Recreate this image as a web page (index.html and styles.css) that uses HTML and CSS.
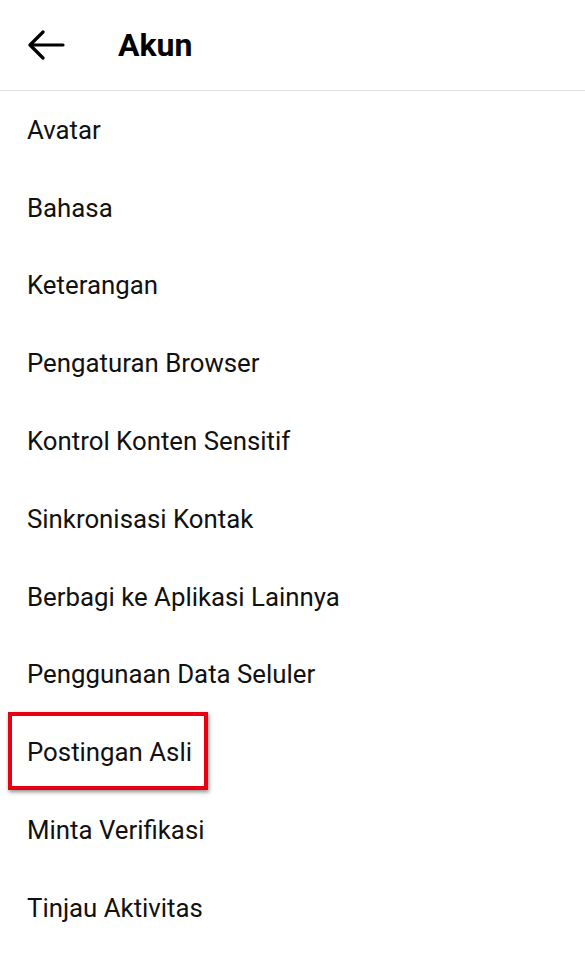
FILE: index.html
```html
<!DOCTYPE html>
<html lang="id">
<head>
    <meta charset="UTF-8">
    <meta name="viewport" content="width=device-width, initial-scale=1.0">
    <title>Akun</title>
    <link rel="stylesheet" href="styles.css">
</head>
<body>
    <div class="header">
        <svg class="back" width="38" height="30" viewBox="0 0 38 30">
            <path d="M36 15H3M16 2L3 15l13 13" fill="none" stroke="#000" stroke-width="3.2" stroke-linecap="round" stroke-linejoin="round"/>
        </svg>
        <h1>Akun</h1>
    </div>
    <ul class="menu">
        <li>Avatar</li>
        <li>Bahasa</li>
        <li>Keterangan</li>
        <li>Pengaturan Browser</li>
        <li>Kontrol Konten Sensitif</li>
        <li>Sinkronisasi Kontak</li>
        <li>Berbagi ke Aplikasi Lainnya</li>
        <li>Penggunaan Data Seluler</li>
        <li class="marked"><span class="mark"></span>Postingan Asli</li>
        <li>Minta Verifikasi</li>
        <li>Tinjau Aktivitas</li>
    </ul>
</body>
</html>
```

FILE: styles.css
```css
body {
    margin: 0;
    font-family: Roboto, "Noto Sans", sans-serif;
    background: #fff;
    color: #111;
}
.header {
    height: 90px;
    display: flex;
    align-items: center;
    border-bottom: 1px solid #e2e2e2;
}
.back {
    margin-left: 27px;
}
h1 {
    margin: 0 0 0 53px;
    font-size: 32px;
    font-weight: 700;
    color: #000;
}
.menu {
    list-style: none;
    margin: 0;
    padding: 0;
}
.menu li {
    height: 77.8px;
    display: flex;
    align-items: center;
    padding-left: 27px;
    font-size: 25.8px;
}
.marked {
    position: relative;
}
.mark {
    position: absolute;
    left: 8px;
    top: -1px;
    width: 192px;
    height: 70px;
    border: 4px solid #e60012;
    box-shadow: 1px 2px 4px rgba(0, 0, 0, 0.45);
}
```
